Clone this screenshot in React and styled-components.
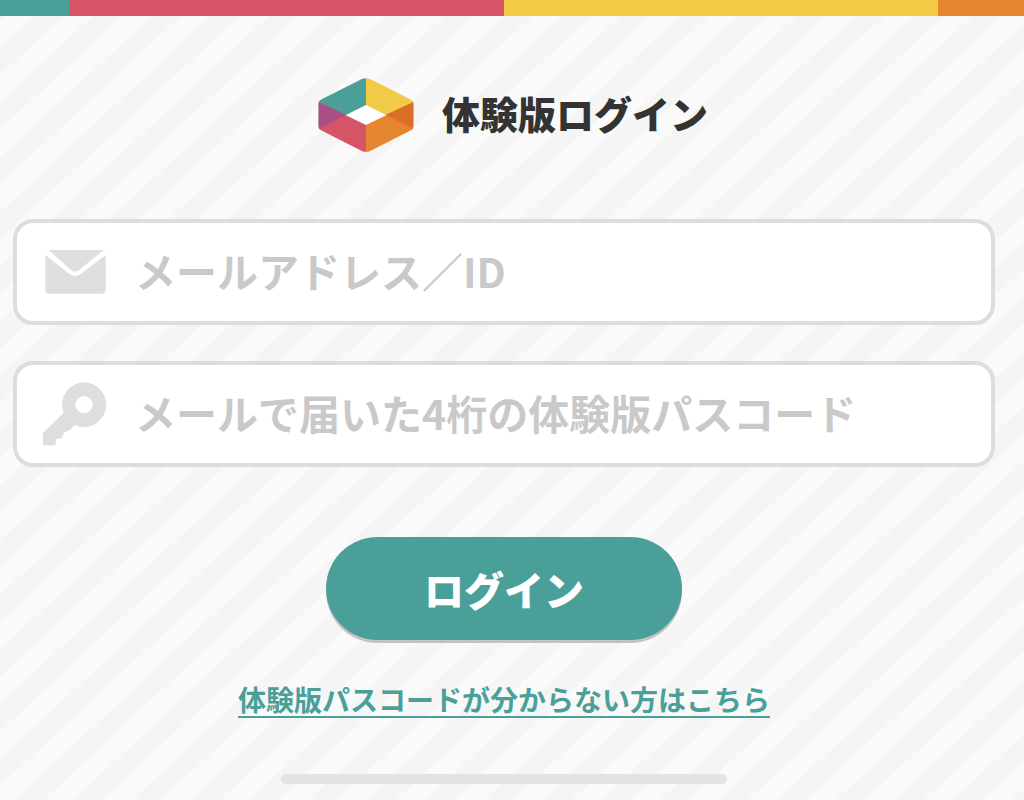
import React, { useState } from "react";
import styled, { createGlobalStyle } from "styled-components";

const GlobalStyle = createGlobalStyle`
  * {
    box-sizing: border-box;
  }

  body {
    margin: 0;
    font-family: "Noto Sans CJK JP", "Noto Sans", sans-serif;
    font-weight: 700;
    color: #333;
    background: repeating-linear-gradient(
      -43deg,
      #f5f5f5 0,
      #f5f5f5 8px,
      #fafafa 9px,
      #fafafa 28px,
      #f5f5f5 29px,
      #f5f5f5 40px
    );
  }
`;

const Page = styled.div`
  min-height: 100vh;
  display: flex;
  flex-direction: column;
`;

const ColorBar = styled.div`
  display: grid;
  grid-template-columns: 70fr 434fr 434fr 86fr;
  height: 16px;
`;

const Stripe = styled.span`
  background: ${(props) => props.$color};
`;

const Main = styled.main`
  flex: 1;
  display: flex;
  flex-direction: column;
  align-items: center;
  padding: 62px 29px 16px 13px;
`;

const Header = styled.header`
  display: flex;
  align-items: center;
  gap: 28px;
  height: 74px;
  padding-left: 18px;
`;

const Title = styled.h1`
  margin: 0;
  padding-bottom: 4px;
  font-size: 38px;
  line-height: 56px;
  font-weight: 900;
`;

const Form = styled.form`
  width: 100%;
  display: flex;
  flex-direction: column;
  align-items: center;
  gap: 36px;
  margin-top: 67px;
`;

const Field = styled.label`
  width: 100%;
  height: 106px;
  display: flex;
  align-items: center;
  gap: 28px;
  padding: 0 26px;
  background: #fff;
  border: 4px solid #ddd;
  border-radius: 20px;
`;

const FieldIcon = styled.svg`
  flex: none;
  width: 64px;
  height: 64px;
  fill: #dedede;
`;

const Input = styled.input`
  flex: 1;
  min-width: 0;
  height: 68px;
  padding: 0 0 4px;
  border: 0;
  outline: 0;
  background: none;
  font: inherit;
  font-size: 41px;
  color: #333;

  &::placeholder {
    color: #c9c9c9;
    opacity: 1;
  }
`;

const Button = styled.button`
  width: 356px;
  height: 103px;
  margin-top: 34px;
  padding: 0;
  border: 0;
  border-radius: 52px;
  background: #4aa098;
  box-shadow: 0 3px 0 #c2c4c3;
  font: inherit;
  font-size: 40px;
  font-weight: 900;
  color: #fff;
  cursor: pointer;
`;

const HelpLink = styled.a`
  margin-top: 43px;
  font-size: 28px;
  line-height: 33px;
  color: #4aa098;
  text-decoration: none;
  border-bottom: 2px solid #4aa098;
`;

const HomeBar = styled.div`
  width: 446px;
  max-width: 100%;
  height: 10px;
  margin-top: auto;
  border-radius: 5px;
  background: #e3e3e3;
`;

const Logo = () => (
  <svg width="96" height="74" viewBox="54 53 288 222" aria-hidden="true">
    <defs>
      <clipPath id="logo-shape">
        <path d="M184 57Q198 50 212 57L331 117Q341 122 341 133V197Q341 206 333 210L212 271Q198 278 184 271L63 210Q55 206 55 197V133Q55 122 65 117Z" />
      </clipPath>
    </defs>
    <g clipPath="url(#logo-shape)">
      <path fill="#fff" d="M138 163L198 134L257 163L198 194Z" />
      <path fill="#4aa098" d="M55 125V40H198V134L55 205Z" />
      <path fill="#f1cb45" d="M198 40H341V205L198 134Z" />
      <path fill="#d55566" d="M55 125L198 194V285H55Z" />
      <path fill="#e58530" d="M341 125L198 194V285H341Z" />
      <path fill="#aa4f86" d="M55 125L138 163L55 205Z" />
      <path fill="#dc6e29" d="M341 125L257 163L341 205Z" />
    </g>
  </svg>
);

const MailIcon = () => (
  <FieldIcon viewBox="130 121 192 192" aria-hidden="true">
    <path d="M147 151H312L239 210Q226 221 213 210Z" />
    <path d="M137 166L210 224Q226 235 242 224L318 166V271Q318 282 307 282H148Q137 282 137 271Z" />
  </FieldIcon>
);

const KeyIcon = () => (
  <FieldIcon viewBox="130 97 192 192" aria-hidden="true">
    <path
      fillRule="evenodd"
      d="M253 98A67 67 0 1 1 225 226L207 244L193 248L187 265L170 268L167 287H130V250L192 190A67 67 0 0 1 253 98ZM253 139A26 26 0 1 0 253 191A26 26 0 1 0 253 139Z"
    />
  </FieldIcon>
);

const App = () => {
  const [loginId, setLoginId] = useState("");
  const [passcode, setPasscode] = useState("");

  return (
    <>
      <GlobalStyle />
      <Page>
        <ColorBar>
          <Stripe $color="#4aa098" />
          <Stripe $color="#d55566" />
          <Stripe $color="#f1cb45" />
          <Stripe $color="#e58530" />
        </ColorBar>
        <Main>
          <Header>
            <Logo />
            <Title>体験版ログイン</Title>
          </Header>
          <Form onSubmit={(e) => e.preventDefault()}>
            <Field>
              <MailIcon />
              <Input
                type="text"
                aria-label="メールアドレス／ID"
                placeholder="メールアドレス／ID"
                value={loginId}
                onChange={(e) => setLoginId(e.target.value)}
              />
            </Field>
            <Field>
              <KeyIcon />
              <Input
                type="password"
                aria-label="体験版パスコード"
                placeholder="メールで届いた4桁の体験版パスコード"
                value={passcode}
                onChange={(e) => setPasscode(e.target.value)}
              />
            </Field>
            <Button type="submit">ログイン</Button>
          </Form>
          <HelpLink href="#">体験版パスコードが分からない方はこちら</HelpLink>
          <HomeBar />
        </Main>
      </Page>
    </>
  );
};

export default App;
